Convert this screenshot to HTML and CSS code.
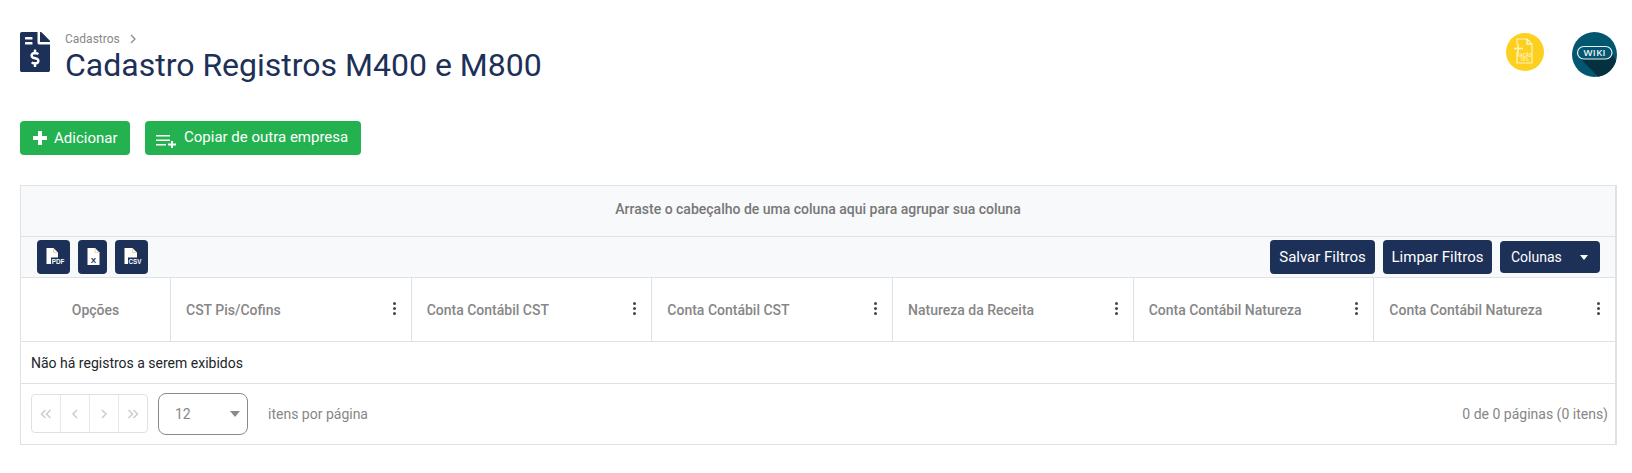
FILE: index.html
```html
<!DOCTYPE html>
<html lang="pt-BR">
<head>
<meta charset="utf-8">
<title>Cadastro Registros M400 e M800</title>
<link rel="stylesheet" href="styles.css">
</head>
<body>
<header class="page-head">
  <div class="title-wrap">
    <svg class="title-icon" viewBox="0 0 384 512"><path fill="#1d3057" d="M377 105L279.1 7c-4.5-4.5-10.6-7-17-7H256v128h128v-6.1c0-6.3-2.5-12.4-7-16.9zm-153 31V0H24C10.7 0 0 10.7 0 24v464c0 13.3 10.7 24 24 24h336c13.3 0 24-10.7 24-24V160H248c-13.2 0-24-10.8-24-24zM64 72c0-4.42 3.58-8 8-8h80c4.42 0 8 3.58 8 8v16c0 4.42-3.58 8-8 8H72c-4.42 0-8-3.58-8-8V72zm0 80v-16c0-4.42 3.58-8 8-8h80c4.42 0 8 3.58 8 8v16c0 4.42-3.58 8-8 8H72c-4.42 0-8-3.58-8-8zm144 263.88V440c0 4.42-3.58 8-8 8h-16c-4.42 0-8-3.58-8-8v-24.29c-11.29-.58-22.27-4.52-31.37-11.35-3.9-2.93-4.1-8.77-.57-12.14l11.75-11.21c2.77-2.64 6.89-2.76 10.13-.73 3.87 2.42 8.26 3.72 12.82 3.72h28.11c6.5 0 11.8-5.92 11.8-13.19 0-5.95-3.61-11.19-8.77-12.73l-45-13.5c-18.59-5.58-31.58-23.42-31.58-43.39 0-24.52 19.05-44.44 42.67-45.07V232c0-4.42 3.58-8 8-8h16c4.42 0 8 3.58 8 8v24.29c11.29.58 22.27 4.51 31.37 11.35 3.9 2.93 4.1 8.77.57 12.14l-11.75 11.21c-2.77 2.64-6.89 2.76-10.13.73-3.87-2.43-8.26-3.72-12.82-3.72h-28.11c-6.5 0-11.8 5.92-11.8 13.19 0 5.95 3.61 11.19 8.77 12.73l45 13.5c18.59 5.58 31.58 23.42 31.58 43.39 0 24.53-19.05 44.44-42.67 45.07z"/></svg>
    <div>
      <div class="crumb"><span>Cadastros</span><svg class="crumb-sep" viewBox="0 0 8 10"><path d="M2 1l4 4-4 4" fill="none" stroke="#888" stroke-width="1.2"/></svg></div>
      <h1 class="title">Cadastro Registros M400 e M800</h1>
    </div>
  </div>
  <div class="head-links">
    <svg class="round-yellow" viewBox="0 0 38 38">
      <circle cx="19" cy="19" r="19" fill="#fdd01f"/>
      <path d="M11 11V6h10l5 5v19H11V19" fill="none" stroke="#fff6c8" stroke-width="1.1"/>
      <path d="M21 6v5h5M12 11v9M8 15.500h9" fill="none" stroke="#fff6c8" stroke-width="1.400"/>
      <text x="18.500" y="23.500" class="tiny-text">RAÇÃO</text>
      <text x="18.500" y="28" class="tiny-text">10%</text>
    </svg>
    <svg class="round-wiki" viewBox="0 0 45 45">
      <circle cx="22.500" cy="22.500" r="22.500" fill="#03566f"/>
      <path d="M9 27L40 20 44 29A22.500 22.500 0 0 1 26 44.800Z" fill="#04303f"/>
      <rect x="5.500" y="14.500" width="34.500" height="12.500" rx="6.200" fill="#03566f" stroke="#e8f1f4" stroke-width="1.200"/>
      <text x="22.700" y="24.300" class="wiki-text">WIKI</text>
    </svg>
  </div>
</header>

<div class="actions">
  <button class="btn-green btn-add">
    <svg class="add-ico" viewBox="0 0 16 16"><path d="M6 1h4v5h5v4h-5v5H6v-5H1V6h5z" fill="#fff"/></svg>Adicionar
  </button>
  <button class="btn-green btn-copy">
    <svg class="copy-ico" viewBox="0 0 22 16"><path d="M1 3h14v1.500H1zM1 7.500h14V9H1zM1 12h10v1.500H1zM16 9h2v2.500h3v2h-3V16h-2v-2.500h-3v-2h3z" fill="#fff"/></svg><span class="copy-label">Copiar de outra empresa</span>
  </button>
</div>

<section class="grid">
  <div class="group-panel">Arraste o cabeçalho de uma coluna aqui para agrupar sua coluna</div>
  <div class="toolbar">
    <div class="tool-left">
      <button class="tool-btn file-btn w33"><svg class="file-ico" viewBox="0 0 22 18"><path d="M3.500 0h7l4.500 4.500V16H3.500z" fill="#fff"/><path d="M10.500 0v4.500H15" fill="none" stroke="#f3d3a6"/><rect x="8" y="9.500" width="14" height="7" fill="#1d3057"/><text x="15" y="15.500" class="file-text">PDF</text></svg></button>
      <button class="tool-btn file-btn w29"><svg class="file-ico" viewBox="0 0 22 18"><path d="M5.500 0h7.500l4.500 4.500V17H5.500z" fill="#fff"/><path d="M13 0v4.500h4.500" fill="none" stroke="#f3d3a6"/><text x="11.500" y="14.500" class="file-text dark">X</text></svg></button>
      <button class="tool-btn file-btn w33"><svg class="file-ico" viewBox="0 0 22 18"><path d="M3.500 0h8l4.500 4.500V16H3.500z" fill="#fff"/><path d="M11.500 0v4.500H16" fill="none" stroke="#f3d3a6"/><rect x="7" y="9.500" width="14" height="7" fill="#1d3057"/><text x="14" y="15.500" class="file-text">CSV</text></svg></button>
    </div>
    <div class="tool-right">
      <button class="tool-btn text-btn w105">Salvar Filtros</button>
      <button class="tool-btn text-btn w109">Limpar Filtros</button>
      <button class="tool-btn columns-btn">Colunas<span class="caret-w"></span></button>
    </div>
  </div>
  <div class="head-row">
    <div class="head-cell center">Opções</div>
    <div class="head-cell">CST Pis/Cofins<span class="kebab"><i></i><i></i><i></i></span></div>
    <div class="head-cell">Conta Contábil CST<span class="kebab"><i></i><i></i><i></i></span></div>
    <div class="head-cell">Conta Contábil CST<span class="kebab"><i></i><i></i><i></i></span></div>
    <div class="head-cell">Natureza da Receita<span class="kebab"><i></i><i></i><i></i></span></div>
    <div class="head-cell">Conta Contábil Natureza<span class="kebab"><i></i><i></i><i></i></span></div>
    <div class="head-cell">Conta Contábil Natureza<span class="kebab"><i></i><i></i><i></i></span></div>
  </div>
  <div class="empty-row">Não há registros a serem exibidos</div>
  <div class="pager">
    <div class="pager-left">
      <div class="page-links">
        <span><svg class="chev" viewBox="0 0 12 10"><path d="M5.500 1L1.500 5l4 4M10.500 1l-4 4 4 4"/></svg></span>
        <span><svg class="chev" viewBox="0 0 12 10"><path d="M8 1L4 5l4 4"/></svg></span>
        <span><svg class="chev" viewBox="0 0 12 10"><path d="M4 1l4 4-4 4"/></svg></span>
        <span><svg class="chev" viewBox="0 0 12 10"><path d="M1.500 1l4 4-4 4M6.500 1l4 4-4 4"/></svg></span>
      </div>
      <div class="size-select">12<span class="caret-g"></span></div>
      <span class="pager-text">itens por página</span>
    </div>
    <span class="pager-text">0 de 0 páginas (0 itens)</span>
  </div>
</section>
</body>
</html>
```
FILE: styles.css
```css
* { box-sizing: border-box; }
html, body { margin: 0; padding: 0; background: #fff; }
body { font-family: Roboto, "Liberation Sans", sans-serif; height: 473px; overflow: hidden; padding: 32px 15px 0 20px; }
button { font-family: inherit; border: 0; padding: 0; margin: 0; color: #fff; }

.page-head { display: flex; justify-content: space-between; align-items: flex-start; height: 89px; }
.title-wrap { display: flex; gap: 15px; }
.title-icon { width: 30px; height: 40px; flex: none; }
.crumb { display: flex; align-items: center; gap: 9px; font-size: 12px; line-height: 14px; color: #888; height: 14px; }
.crumb-sep { width: 8px; height: 10px; }
.title { margin: 0; font-weight: 400; font-size: 32px; line-height: 38px; color: #1d3057; }

.head-links { display: flex; gap: 28px; }
.round-yellow { width: 38px; height: 38px; margin-top: 1px; }
.round-wiki { width: 45px; height: 45px; }
.tiny-text { font: 500 4.500px Roboto, sans-serif; fill: #fff6c8; text-anchor: middle; }
.wiki-text { font: 600 9.500px "Open Sans", sans-serif; fill: #eef5f7; text-anchor: middle; letter-spacing: .4px; }

.actions { display: flex; gap: 15px; height: 34px; }
.btn-green { background: #23b24f; border-radius: 4px; height: 34px; font-size: 15px; display: flex; align-items: center; }
.btn-add { width: 110px; padding-left: 12px; gap: 6px; }
.add-ico { width: 16px; height: 16px; }
.btn-copy { width: 216px; padding-left: 10px; gap: 7px; }
.copy-ico { width: 22px; height: 16px; margin-top: 4px; }
.copy-label { margin-top: -2px; }

.grid { margin-top: 30px; border: 1px solid #dee2e6; width: 1597px; border-right-width: 2px; }
.group-panel { height: 51px; padding-bottom: 5px; background: #f8f9fa; border-bottom: 1px solid #dee2e6; display: flex; align-items: center; justify-content: center; font-size: 14px; font-weight: 500; color: #777; }
.toolbar { height: 41px; background: #f8f9fa; border-bottom: 1px solid #dee2e6; display: flex; justify-content: space-between; padding: 3px 15px 0 16px; }
.tool-left, .tool-right { display: flex; gap: 8px; align-items: flex-start; }
.tool-btn { background: #1d3057; border-radius: 4px; height: 34px; display: flex; align-items: center; justify-content: center; font-size: 15px; }
.w33 { width: 33px; }
.w29 { width: 29px; }
.w105 { width: 105px; }
.w109 { width: 109px; }
.file-ico { width: 22px; height: 18px; }
.file-text { font: 700 6.300px "Liberation Sans", sans-serif; fill: #fff; text-anchor: middle; }
.file-text.dark { fill: #1d3057; font-size: 8px; }
.columns-btn { width: 100px; height: 32px; margin-top: 1px; justify-content: flex-start; padding-left: 11px; gap: 18px; font-size: 14px; }
.caret-w { width: 0; height: 0; border: 4.500px solid transparent; border-top: 5px solid #fff; border-bottom: 0; }

.head-row { display: grid; grid-template-columns: 150px repeat(6, 1fr); height: 64px; border-bottom: 1px solid #dee2e6; }
.head-cell { display: flex; align-items: center; justify-content: space-between; padding: 0 15px 0 15px; font-size: 14px; font-weight: 500; color: #868686; border-right: 1px solid #dee2e6; }
.head-cell:last-child { border-right: 0; }
.head-cell.center { justify-content: center; padding: 0; }
.kebab { display: flex; flex-direction: column; gap: 2px; margin-top: -3px; }
.kebab i { display: block; width: 3px; height: 3px; border-radius: 50%; background: #3f4650; }

.empty-row { height: 42px; border-bottom: 1px solid #dee2e6; display: flex; align-items: center; padding-left: 10px; font-size: 14px; color: #212529; }
.pager { height: 60px; display: flex; align-items: center; justify-content: space-between; padding: 0 7px 0 10px; }
.pager-left { display: flex; align-items: center; margin-top: -1px; }
.page-links { display: flex; width: 117px; height: 39px; border: 1px solid #dee2e6; border-radius: 4px; }
.page-links span { flex: 1; display: flex; align-items: center; justify-content: center; border-right: 1px solid #e6e8eb; }
.page-links span:last-child { border-right: 0; }
.chev { width: 12px; height: 10px; fill: none; stroke: #c9ccd0; stroke-width: 1.500; }
.size-select { width: 90px; height: 42px; margin-left: 10px; border: 1px solid #8a8a8a; border-radius: 8px; display: flex; align-items: center; justify-content: space-between; padding: 0 7px 0 16px; font-size: 14px; color: #868686; }
.caret-g { width: 0; height: 0; border: 5.500px solid transparent; border-top: 6px solid #8a8a8a; border-bottom: 0; }
.pager-text { font-size: 14px; color: #868686; }
.size-select + .pager-text { margin-left: 20px; }
```
